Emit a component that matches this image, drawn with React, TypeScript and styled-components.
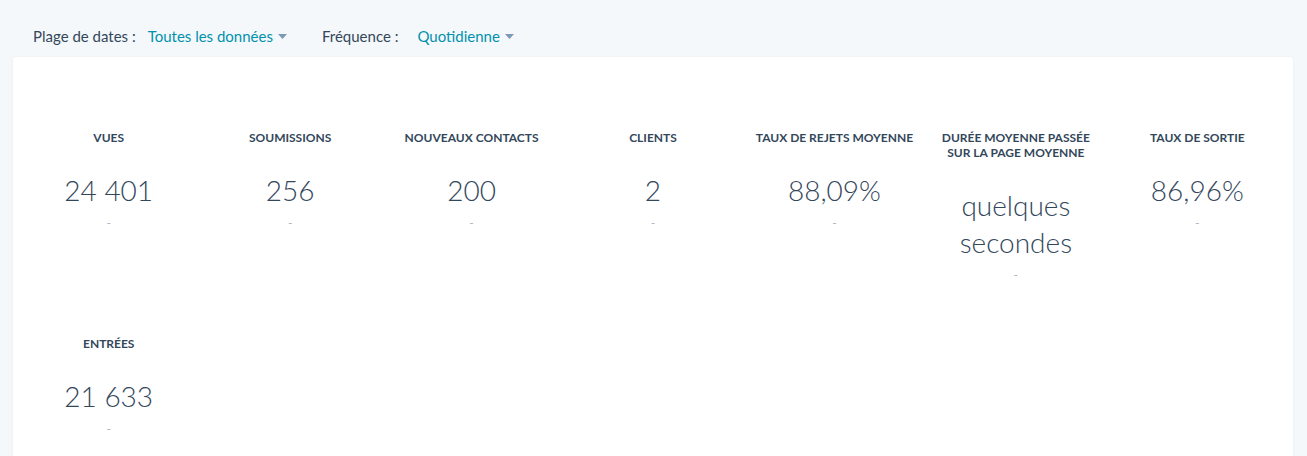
import React from "react";
import styled, { createGlobalStyle } from "styled-components";

const Global = createGlobalStyle`
  html, body {
    margin: 0;
    padding: 0;
    background: #f5f8fa;
    font-family: Lato, "Open Sans", sans-serif;
    color: #33475b;
    -webkit-font-smoothing: antialiased;
  }
`;

const Page = styled.div`
  width: 1307px;
  height: 456px;
  overflow: hidden;
  background: #f5f8fa;
`;

const FilterBar = styled.div`
  display: flex;
  align-items: center;
  height: 20px;
  padding: 26px 0 11px 33px;
  font-size: 15px;
  line-height: 20px;
`;

const Filter = styled.div`
  display: flex;
  align-items: center;
  margin-right: 35px;
`;

const Label = styled.span<{ $gap: number }>`
  color: #33475b;
  margin-right: ${(p) => p.$gap}px;
`;

const Dropdown = styled.button`
  display: flex;
  align-items: center;
  gap: 5px;
  border: 0;
  padding: 0;
  background: none;
  font: inherit;
  color: #0091ae;
  cursor: pointer;
`;

const Card = styled.div`
  margin: 0 14px 0 13px;
  min-height: 420px;
  background: #ffffff;
  border-radius: 3px;
  box-shadow: 0 0 2px rgba(45, 62, 80, 0.08);
  padding: 73px 5px 0;
`;

const Grid = styled.div`
  display: grid;
  grid-template-columns: repeat(7, 1fr);
  row-gap: 54px;
`;

const Metric = styled.div`
  display: flex;
  flex-direction: column;
  align-items: center;
  text-align: center;
  padding: 0 6px;
`;

const Title = styled.div`
  font-size: 12px;
  line-height: 15px;
  font-weight: 700;
  text-transform: uppercase;
  color: #33475b;
`;

const Value = styled.div`
  margin-top: 27px;
  font-size: 28px;
  line-height: 37px;
  font-weight: 300;
  color: #33475b;
`;

const Delta = styled.div`
  margin-top: 6px;
  font-size: 12px;
  line-height: 15px;
  color: #a5b4c4;
`;

const Caret = () => (
  <svg width="9" height="5" viewBox="0 0 9 5" aria-hidden="true">
    <path d="M0 0 H9 L4.5 5 Z" fill="#7c98b6" />
  </svg>
);

const metrics = [
  { title: "Vues", value: "24 401" },
  { title: "Soumissions", value: "256" },
  { title: "Nouveaux contacts", value: "200" },
  { title: "Clients", value: "2" },
  { title: "Taux de rejets moyenne", value: "88,09%" },
  { title: "Durée moyenne passée sur la page moyenne", value: "quelques secondes" },
  { title: "Taux de sortie", value: "86,96%" },
  { title: "Entrées", value: "21 633" },
];

export default function App() {
  return (
    <Page>
      <Global />
      <FilterBar>
        <Filter>
          <Label $gap={12}>Plage de dates :</Label>
          <Dropdown>
            Toutes les données
            <Caret />
          </Dropdown>
        </Filter>
        <Filter>
          <Label $gap={19}>Fréquence :</Label>
          <Dropdown>
            Quotidienne
            <Caret />
          </Dropdown>
        </Filter>
      </FilterBar>
      <Card>
        <Grid>
          {metrics.map((m) => (
            <Metric key={m.title}>
              <Title>{m.title}</Title>
              <Value>{m.value}</Value>
              <Delta>-</Delta>
            </Metric>
          ))}
        </Grid>
      </Card>
    </Page>
  );
}
